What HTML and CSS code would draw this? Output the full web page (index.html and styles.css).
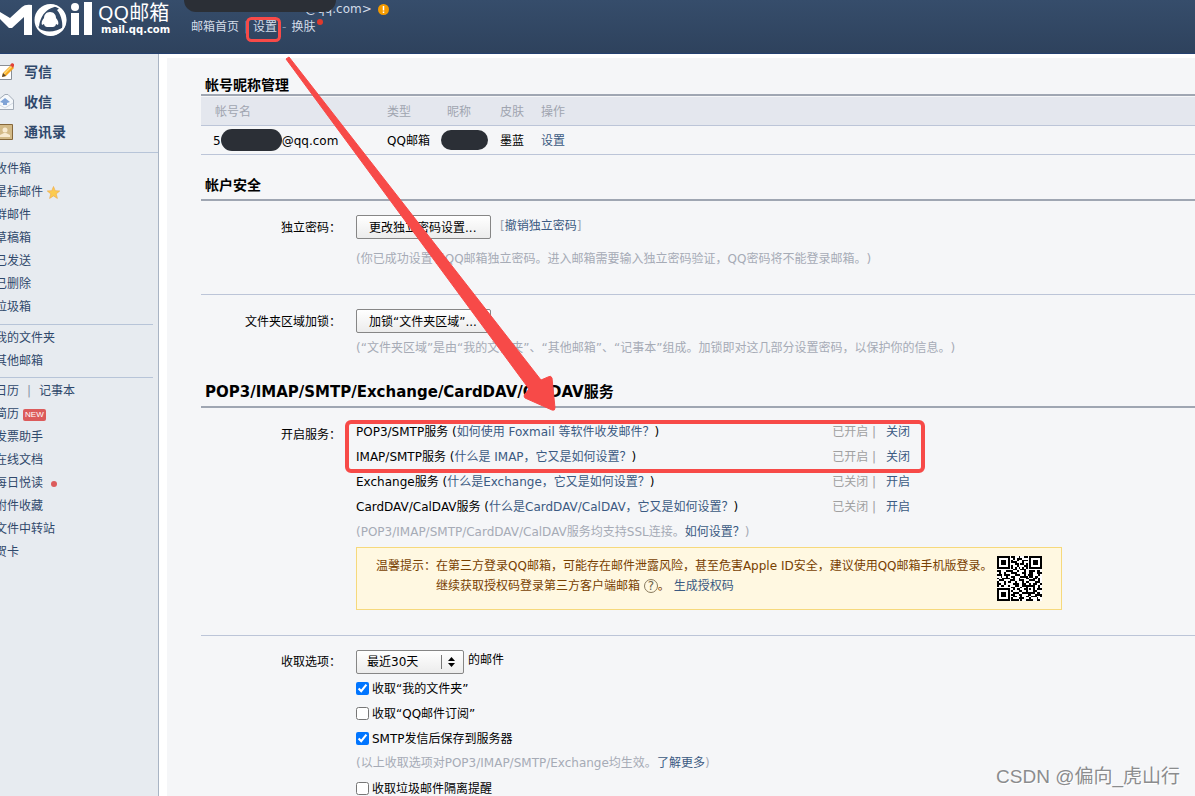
FILE: index.html
```html
<!DOCTYPE html>
<html lang="zh-CN">
<head>
<meta charset="utf-8">
<title>QQ邮箱 - 设置</title>
<link rel="stylesheet" href="styles.css">
</head>
<body>
<header class="header">
  <div class="brand">
    <svg class="brand-mark" width="94" height="40" viewBox="0 0 94 40" aria-label="Mail">
      <path d="M0 12L10 18L22 7Q25 4 32 5V35H24V17L12 28H9L0 19Z" fill="#fff"/>
      <circle cx="50.500" cy="20" r="15" fill="none" stroke="#fff" stroke-width="2"/>
      <path d="M35 21C36 9 46 2 58 6C49 8 41 12 39 27C37 25 35 24 35 21ZM60 8C69 15 67 26 62 31C63 24 62 16 57 10ZM38 28C45 33 55 33 65 26C61 36 46 40 38 28Z" fill="#fff"/>
      <path d="M50 12c4 0 6 3 6 6 2 2 3 5 2 7l-2-1c0 2-2 3-3 3h-6c-1 0-3-1-3-3l-2 1c-1-2 0-5 2-7 0-3 2-6 6-6z" fill="#fff"/>
      <circle cx="75" cy="7" r="4" fill="#fff"/>
      <rect x="71" y="13" width="8" height="22" fill="#fff"/>
      <rect x="84" y="2" width="8" height="33" fill="#fff"/>
    </svg>
    <div class="brand-text">
      <span class="brand-name">QQ邮箱</span>
      <span class="brand-url">mail.qq.com</span>
    </div>
  </div>
  <div class="account">
    <div class="account-line"><span class="mask mask-account"></span><span>@qq.com&gt;</span>
      <svg class="warn" width="11" height="11" viewBox="0 0 11 11"><circle cx="5.5" cy="5.5" r="5.5" fill="#f59b00"/><path d="M5.5 2v4.500M5.500 7.500v1.500" stroke="#fff" stroke-width="1.500"/></svg>
    </div>
    <nav class="account-links"><a href="#">邮箱首页</a><i>|</i><a class="marked" href="#">设置</a><i>-</i><a class="skin" href="#">换肤</a></nav>
  </div>
</header>
<div class="page">
  <aside class="sidebar">
    <nav class="primary">
      <a href="#"><svg width="14" height="18" viewBox="0 0 14 18"><path d="M-4 2.500H11.500V16.500H-4Z" fill="#fff" stroke="#8a8f96"/><path d="M2 14l1-4 8-8 3 3-8 8z" fill="#f6a821"/><path d="M3.500 10.500l8-8 1 1-8 8z" fill="#ffd977"/><path d="M2 14l1-4 3 3z" fill="#5a4630"/><path d="M10 2l2-2 2 1v2l-1 2z" fill="#e0443a"/></svg>写信</a>
      <a href="#"><svg width="14" height="18" viewBox="0 0 14 18"><path d="M-2 7L5 1.500H8L13.500 7V16.500H-2Z" fill="#f5f8fb" stroke="#a3acb8"/><path d="M5 5l5 4-3 1v2H3v-2L0 9z" fill="#7fa3d6"/><path d="M-2 11l7 4 8-5" fill="none" stroke="#d3dae3"/></svg>收信</a>
      <a href="#"><svg width="14" height="18" viewBox="0 0 14 18"><path d="M-4 1.500H12.500V16.500H-4Z" fill="#d3ba88" stroke="#86673a"/><circle cx="5" cy="7" r="2.500" fill="#f8ead0"/><path d="M0 14v-2l4-2h2l4 2v2z" fill="#f8ead0"/></svg>通讯录</a>
    </nav>
    <nav class="folders">
      <a href="#">收件箱</a>
      <a href="#">星标邮件<svg class="star" width="13" height="13" viewBox="0 0 13 13"><path d="M6.500 .5l1.700 4.200 4.500.3-3.500 2.900 1.200 4.500-3.900-2.500-3.900 2.500 1.200-4.500L.3 5l4.500-.3z" fill="#fccb50" stroke="#f0ad4e" stroke-width=".7"/></svg></a>
      <a href="#">群邮件</a>
      <a href="#">草稿箱</a>
      <a href="#">已发送</a>
      <a href="#">已删除</a>
      <a href="#">垃圾箱</a>
    </nav>
    <nav class="folders">
      <a href="#">我的文件夹</a>
      <a href="#">其他邮箱</a>
    </nav>
    <nav class="folders">
      <div class="pair"><a href="#">日历</a><i>|</i><a href="#">记事本</a></div>
      <a href="#">简历<span class="new">NEW</span></a>
      <a href="#">发票助手</a>
      <a href="#">在线文档</a>
      <a href="#">每日悦读<span class="dot"></span></a>
      <a href="#">附件收藏</a>
      <a href="#">文件中转站</a>
      <a href="#">贺卡</a>
    </nav>
  </aside>
  <main class="content">
    <section class="accounts">
      <h2>帐号昵称管理</h2>
      <table>
        <thead><tr><th class="c-name">帐号名</th><th class="c-type">类型</th><th class="c-nick">昵称</th><th class="c-skin">皮肤</th><th>操作</th></tr></thead>
        <tbody><tr><td>5<span class="mask mask-id"></span>@qq.com</td><td>QQ邮箱</td><td><span class="mask mask-nick"></span></td><td>墨蓝</td><td><a href="#">设置</a></td></tr></tbody>
      </table>
    </section>
    <section class="security">
      <h2>帐户安全</h2>
      <div class="row">
        <span class="label">独立密码：</span>
        <div class="field">
          <div class="line"><button class="btn" type="button">更改独立密码设置...</button><span class="bracket">[<a href="#">撤销独立密码</a>]</span></div>
          <p class="hint">(你已成功设置了QQ邮箱独立密码。进入邮箱需要输入独立密码验证，QQ密码将不能登录邮箱。)</p>
        </div>
      </div>
      <div class="row ruled lock">
        <span class="label">文件夹区域加锁：</span>
        <div class="field">
          <div class="line"><button class="btn" type="button">加锁“文件夹区域”...</button></div>
          <p class="hint">(“文件夹区域”是由“我的文件夹”、“其他邮箱”、“记事本”组成。加锁即对这几部分设置密码，以保护你的信息。)</p>
        </div>
      </div>
    </section>
    <section class="services">
      <h2>POP3/IMAP/SMTP/Exchange/CardDAV/CalDAV服务</h2>
      <div class="row">
        <span class="label">开启服务：</span>
        <div class="field">
          <ul class="service-list">
            <li><span>POP3/SMTP服务 (<a href="#">如何使用 Foxmail 等软件收发邮件？</a>)</span><span class="state">已开启 |<a href="#">关闭</a></span></li>
            <li><span>IMAP/SMTP服务 (<a href="#">什么是 IMAP，它又是如何设置？</a>)</span><span class="state">已开启 |<a href="#">关闭</a></span></li>
            <li><span>Exchange服务 (<a href="#">什么是Exchange，它又是如何设置？</a>)</span><span class="state">已关闭 |<a href="#">开启</a></span></li>
            <li><span>CardDAV/CalDAV服务 (<a href="#">什么是CardDAV/CalDAV，它又是如何设置？</a>)</span><span class="state">已关闭 |<a href="#">开启</a></span></li>
          </ul>
          <p class="note">(POP3/IMAP/SMTP/CardDAV/CalDAV服务均支持SSL连接。<a href="#">如何设置？</a>)</p>
          <div class="tip">
            <span>温馨提示：</span>
            <div class="tip-text">
              <p>在第三方登录QQ邮箱，可能存在邮件泄露风险，甚至危害Apple ID安全，建议使用QQ邮箱手机版登录。</p>
              <p>继续获取授权码登录第三方客户端邮箱 <span class="help">?</span>。 <a href="#">生成授权码</a></p>
            </div>
            <svg class="qr" width="45" height="45" viewBox="0 0 25 25" shape-rendering="crispEdges">
              <rect width="25" height="25" fill="#fff"/>
              <g fill="none" stroke="#000"><rect x=".5" y=".5" width="6" height="6"/><rect x="18.500" y=".5" width="6" height="6"/><rect x=".5" y="18.500" width="6" height="6"/></g>
              <path d="M2 2h3v3H2zM20 2h3v3h-3zM2 20h3v3H2z"/>
              <path fill="none" stroke="#000" d="M8 .5h2m2 0h1m2 0h2M9 1.500h1m1 0h3M8 2.500h1m2 0h1m2 0h3M8 3.500h3m3 0h1M10 4.500h2m1 0h2m1 0h1M8 5.500h1m2 0h1m3 0h2M8 6.500h1m1 0h1m1 0h1m1 0h1m1 0h1M9 7.500h2m2 0h3M0 8.500h2m3 0h4m2 0h1m3 0h1m2 0h3m1 0h2M1 9.500h1m2 0h1m3 0h3m3 0h2m2 0h2m2 0h3M0 10.500h3m1 0h3m3 0h3m2 0h1m1 0h3m3 0h1M2 11.500h1m2 0h1m2 0h2m3 0h4m1 0h2m1 0h2M0 12.500h1m2 0h4m2 0h1m2 0h1m3 0h2m2 0h2m1 0h1M1 13.500h3m3 0h3m2 0h3m3 0h3m2 0h1M0 14.500h1m3 0h1m1 0h2m2 0h1m3 0h1m1 0h2m3 0h3M0 15.500h2m2 0h1m4 0h3m2 0h2m2 0h1m1 0h2m2 0h1M0 16.500h1m1 0h2m2 0h1m3 0h2m2 0h7m2 0h1M8 17.500h2m3 0h1m2 0h1m3 0h1m2 0h1M9 18.500h1m1 0h2m2 0h2m1 0h1m1 0h1m1 0h3M8 19.500h1m3 0h2m2 0h1m3 0h2M9 20.500h3m2 0h7m1 0h2M8 21.500h2m2 0h2m3 0h2m2 0h4M9 22.500h2m2 0h1m2 0h2m1 0h3m2 0h1M8 23.500h1m3 0h3m3 0h1m3 0h1M8 24.500h4m1 0h1m2 0h4m2 0h2"/>
            </svg>
          </div>
        </div>
      </div>
      <div class="row ruled options">
        <label class="label" for="range">收取选项：</label>
        <div class="field">
          <div class="line">
            <span class="select"><select id="range"><option>最近30天</option></select>
              <svg width="20" height="14" viewBox="0 0 20 14"><path d="M.5 0v14" stroke="#777"/><path d="M7 6l3.500-4 3.500 4zM7 8l3.500 4 3.500-4z"/></svg></span>
            <span>的邮件</span>
          </div>
          <label class="check"><input type="checkbox" checked>收取“我的文件夹”</label>
          <label class="check"><input type="checkbox">收取“QQ邮件订阅”</label>
          <label class="check"><input type="checkbox" checked>SMTP发信后保存到服务器</label>
          <p class="note">(以上收取选项对POP3/IMAP/SMTP/Exchange均生效。<a href="#">了解更多</a>)</p>
          <label class="check"><input type="checkbox">收取垃圾邮件隔离提醒</label>
        </div>
      </div>
    </section>
  </main>
</div>
<svg class="annotation" width="1195" height="796" viewBox="0 0 1195 796" aria-hidden="true">
  <path d="M286 59L289 57L541 380L548 377Q551 375 552 378L555 408Q555 411 552 410L525 398Q523 396 525 394L529 389Z" fill="#f74a48" stroke="#f74a48" stroke-linejoin="round"/>
  <rect x="247.500" y="18.500" width="32" height="22" rx="4" fill="none" stroke="#f74a48" stroke-width="3"/>
  <rect x="347" y="422" width="576" height="49" rx="4" fill="none" stroke="#f74a48" stroke-width="4"/>
</svg>
<div class="watermark">CSDN @偏向_虎山行</div>
</body>
</html>
```
FILE: styles.css
```css
* { box-sizing: border-box; }
body {
  margin: 0;
  height: 100vh;
  overflow: hidden;
  position: relative;
  display: flex;
  flex-direction: column;
  background: #fff;
  color: #000;
  font: 12px/20px "DejaVu Sans", "Noto Sans CJK SC", sans-serif;
  text-spacing-trim: space-all;
}
a { color: #3b5a82; text-decoration: none; }
i { font-style: normal; }
h2, p, ul { margin: 0; padding: 0; }
ul { list-style: none; }

.header {
  flex: none;
  height: 54px;
  display: flex;
  background: linear-gradient(#364d6b, #2e425d);
  border-bottom: 1px solid #24406f;
  color: #d3dce8;
}
.header a { color: #d3dce8; }
.brand { display: flex; width: 184px; gap: 4px; }
.brand-text { display: flex; flex-direction: column; color: #fff; white-space: nowrap; }
.brand-name { font: 20px/26px "Noto Sans", "Noto Sans CJK SC", sans-serif; }
.brand-url { font-size: 10px; line-height: 8px; font-weight: bold; padding-left: 3px; }
.account-line { display: flex; height: 18px; line-height: 18px; }
.mask { background: #2b2f36; }
.mask-account { width: 152px; height: 12px; margin-right: -31px; border-radius: 0 0 12px 12px; z-index: 1; }
.warn { margin: 4px 0 0 6px; }
.account-links { display: flex; gap: 5px; padding-left: 7px; line-height: 18px; }
.account-links i { color: #8391a5; }
.skin::after {
  content: "";
  display: inline-block;
  width: 6px;
  height: 6px;
  margin-left: 2px;
  border-radius: 50%;
  background: #e03a2c;
  vertical-align: 6px;
}

.page { flex: 1; display: flex; min-height: 0; }
.sidebar { flex: none; width: 159px; background: #e7ebf0; border-right: 1px solid #a9b4c4; }
.sidebar a { color: #2f486b; }
.primary { padding: 3px 0 5px; border-bottom: 1px solid #b7c4d8; }
.primary a { display: flex; align-items: center; gap: 10px; font-size: 14px; line-height: 30px; font-weight: bold; }
.folders { margin: 0 5px 0 -5px; padding: 2px 0 4px; line-height: 23px; }
.folders + .folders { border-top: 1px solid #b7c4d8; }
.primary + .folders { padding-top: 5px; padding-bottom: 5px; }
.folders > a, .pair { display: flex; align-items: center; }
.pair i { width: 20px; text-align: center; color: #8a95a5; }
.star { margin-left: 4px; }
.new { margin-left: 4px; padding: 0 2px; border-radius: 2px; background: #dc5b5b; color: #fff; font: 8px/12px "Liberation Sans", sans-serif; }
.dot { width: 6px; height: 6px; margin-left: 8px; border-radius: 50%; background: #dc5b5b; }

.content { flex: 1; min-width: 0; margin: 4px 0 0 8px; padding: 14px 0 0 34px; background: #f5f6f8; }
h2 { padding: 0 4px; border-bottom: 2px solid #9fa6b2; font-size: 14px; line-height: 26px; }
.accounts h2 { height: 24px; }
table { width: 100%; margin-top: 1px; border-spacing: 0; table-layout: fixed; text-align: left; }
th, td { padding: 1px 0 0; height: 29px; border-bottom: 1px solid #bcc5d8; white-space: nowrap; }
th { background: #e4e7ee; color: #a0a5b0; font-weight: normal; }
td:first-child { padding: 0 0 0 12px; }
th:first-child { padding-left: 14px; }
.c-name { width: 186px; }
.c-type { width: 60px; }
.c-nick { width: 53px; }
.c-skin { width: 41px; }
.mask-id, .mask-nick { display: inline-block; height: 22px; border-radius: 11px; vertical-align: -6px; }
.mask-id { width: 61px; }
.mask-nick { width: 47px; height: 20px; margin-left: -6px; vertical-align: -4px; }

.security h2 { margin-top: 18px; height: 28px; line-height: 24px; }
.services h2 { margin-top: 20px; height: 30px; line-height: 28px; font-size: 15px; }
.row { display: grid; grid-template-columns: 140px 1fr; column-gap: 15px; padding-top: 14px; }
.label { text-align: right; line-height: 26px; }
.line { display: flex; gap: 9px; }
.btn, .select select {
  height: 24px;
  border: 1px solid #868686;
  border-radius: 2px;
  background: linear-gradient(#fff, #ececec);
  color: #000;
  font: inherit;
}
.btn { padding: 1px 12px 0; min-width: 135px; text-align: left; }
.bracket { color: #a0a5b0; line-height: 22px; }
.hint, .note { color: #a6abb6; }
.hint { padding: 10px 0 25px; }
.ruled { border-top: 1px solid #bcc5d8; }
.lock .hint { padding: 5px 0 0; }
.services .row { padding-top: 12px; }
.services .label { line-height: 30px; }
.service-list { max-width: 554px; line-height: 25px; }
.service-list li { display: flex; justify-content: space-between; }
.state { color: #a0a0a0; }
.state a { margin-left: 10px; }
.note { line-height: 25px; }
.tip {
  display: flex;
  width: fit-content;
  margin: 2px 0 25px;
  padding: 8px 19px;
  border: 1px solid #f6d97c;
  background: #fff8e1;
  color: #784000;
}
.qr { flex: none; margin-left: 4px; }
.help {
  display: inline-block;
  width: 14px;
  height: 14px;
  border: 1px solid #8a7b5e;
  border-radius: 50%;
  line-height: 12px;
  text-align: center;
  color: #6d6048;
}
.services .options { padding-top: 14px; }
.services .options .label { line-height: 24px; }
.options .line { gap: 4px; margin-bottom: 2px; }
.select { position: relative; }
.select select { display: block; width: 108px; padding: 0 10px; appearance: none; }
.select svg { position: absolute; right: 3px; top: 5px; pointer-events: none; }
.check { display: flex; align-items: center; gap: 3px; height: 25px; }
.check input { width: 13px; height: 13px; margin: 0; }

.annotation { position: absolute; left: 0; top: 0; pointer-events: none; }
.watermark {
  position: absolute;
  right: 15px;
  bottom: 6px;
  color: #8b8c8e;
  font: 19px/26px "Liberation Sans", "Noto Sans CJK SC", sans-serif;
  text-shadow: 1px 1px #fff;
}
```
